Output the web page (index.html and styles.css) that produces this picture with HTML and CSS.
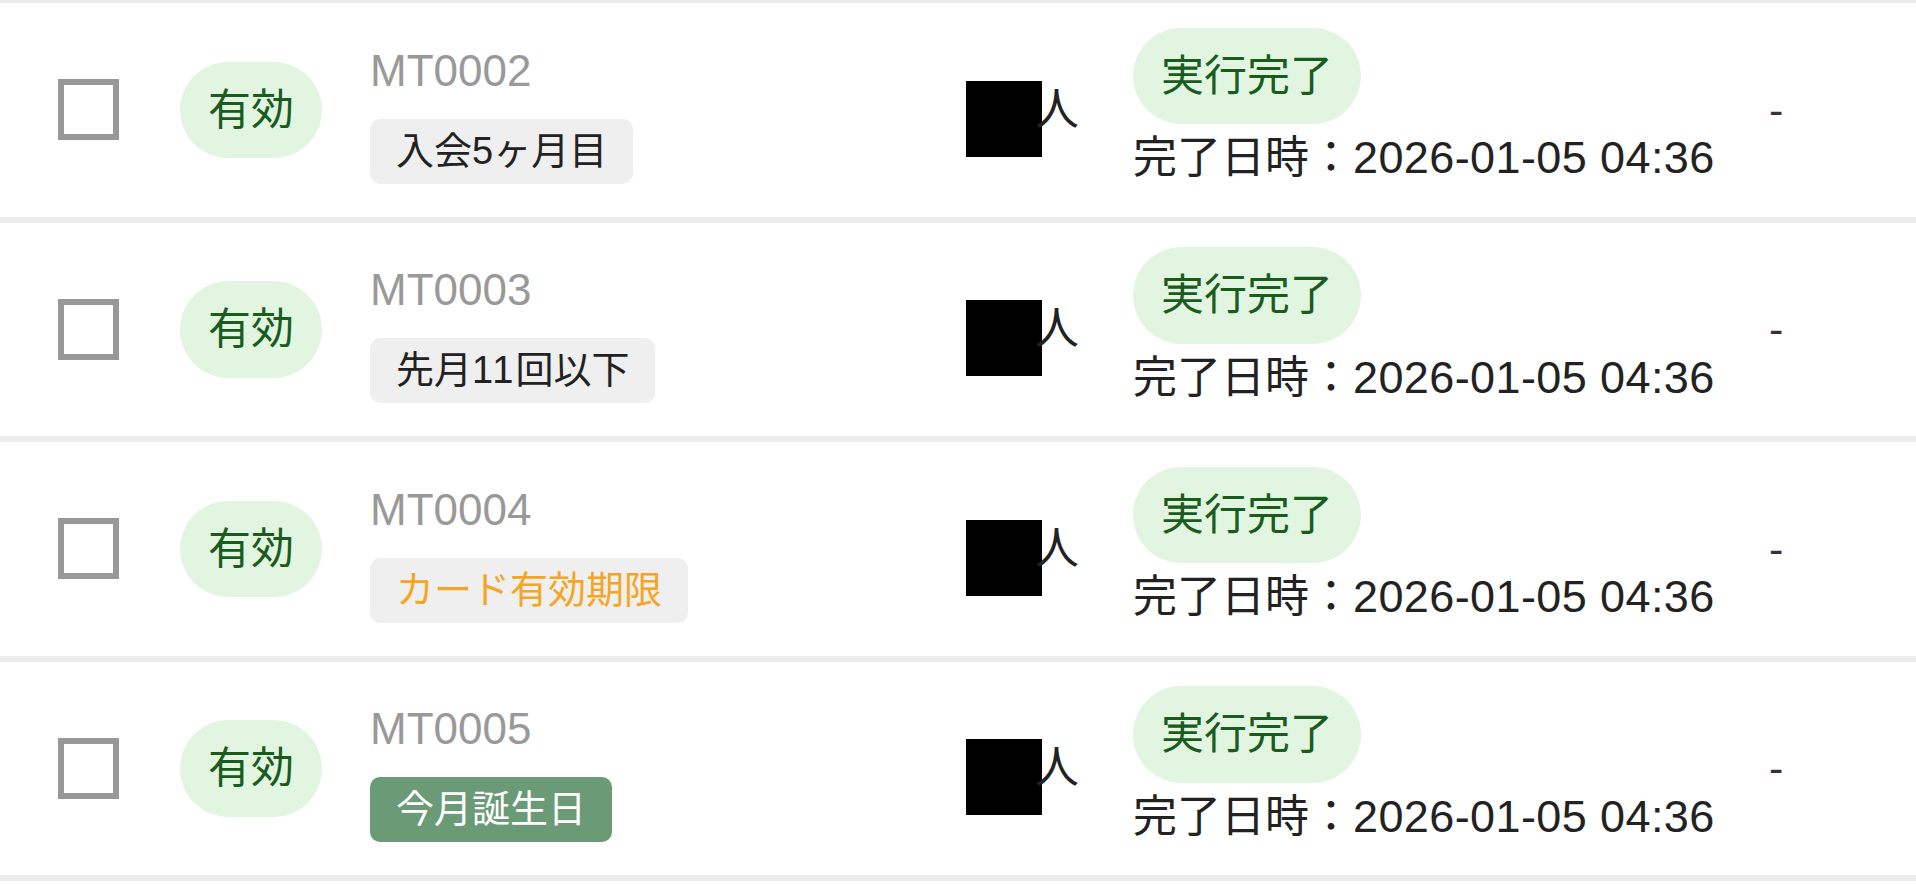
FILE: index.html
```html
<!DOCTYPE html>
<html lang="ja">
<head>
<meta charset="utf-8">
<title>配信一覧</title>
<link rel="stylesheet" href="styles.css">
</head>
<body>
<div class="list">
  <div class="row">
    <div class="cell cell-check"><span class="checkbox"></span></div>
    <div class="cell"><span class="pill">有効</span></div>
    <div class="cell cell-id">
      <div class="code">MT0002</div>
      <span class="tag">入会5ヶ月目</span>
    </div>
    <div class="cell cell-count"><span class="redact"></span><span class="unit">人</span></div>
    <div class="cell cell-status">
      <span class="pill">実行完了</span>
      <div class="done-at">完了日時：<span class="num">2026-01-05 04:36</span></div>
    </div>
    <div class="cell cell-memo">-</div>
  </div>
  <div class="row">
    <div class="cell cell-check"><span class="checkbox"></span></div>
    <div class="cell"><span class="pill">有効</span></div>
    <div class="cell cell-id">
      <div class="code">MT0003</div>
      <span class="tag">先月<span class="num">11</span>回以下</span>
    </div>
    <div class="cell cell-count"><span class="redact"></span><span class="unit">人</span></div>
    <div class="cell cell-status">
      <span class="pill">実行完了</span>
      <div class="done-at">完了日時：<span class="num">2026-01-05 04:36</span></div>
    </div>
    <div class="cell cell-memo">-</div>
  </div>
  <div class="row">
    <div class="cell cell-check"><span class="checkbox"></span></div>
    <div class="cell"><span class="pill">有効</span></div>
    <div class="cell cell-id">
      <div class="code">MT0004</div>
      <span class="tag tag-warn">カード有効期限</span>
    </div>
    <div class="cell cell-count"><span class="redact"></span><span class="unit">人</span></div>
    <div class="cell cell-status">
      <span class="pill">実行完了</span>
      <div class="done-at">完了日時：<span class="num">2026-01-05 04:36</span></div>
    </div>
    <div class="cell cell-memo">-</div>
  </div>
  <div class="row">
    <div class="cell cell-check"><span class="checkbox"></span></div>
    <div class="cell"><span class="pill">有効</span></div>
    <div class="cell cell-id">
      <div class="code">MT0005</div>
      <span class="tag tag-birthday">今月誕生日</span>
    </div>
    <div class="cell cell-count"><span class="redact"></span><span class="unit">人</span></div>
    <div class="cell cell-status">
      <span class="pill">実行完了</span>
      <div class="done-at">完了日時：<span class="num">2026-01-05 04:36</span></div>
    </div>
    <div class="cell cell-memo">-</div>
  </div>
  <div class="row row-next"></div>
</div>
</body>
</html>
```

FILE: styles.css
```css
html, body {
  margin: 0;
  padding: 0;
  background: #ffffff;
  overflow: hidden;
}

body {
  font-family: "Liberation Sans", "Noto Sans CJK JP", sans-serif;
  color: #222222;
}

.list {
  margin-top: -3px;
}

.row {
  display: grid;
  grid-template-columns: 122px 190px 596px 167px 636px 1fr;
  align-items: center;
  height: 213.5px;
  padding-left: 58px;
  border-top: 6px solid #ececec;
  background: #ffffff;
}

.cell {
  display: flex;
  align-items: center;
}

.checkbox {
  display: block;
  width: 61px;
  height: 61px;
  box-sizing: border-box;
  border: 6px solid #989898;
  background: #ffffff;
}

.pill {
  display: inline-block;
  font-size: 43px;
  line-height: 1.5;
  padding: 16px 28px;
  border-radius: 49px;
  background: #e2f5e1;
  color: #1a5c1e;
  white-space: nowrap;
}

.cell-id {
  flex-direction: column;
  align-items: flex-start;
  gap: 16px;
  margin-top: 3px;
}

.code {
  font-size: 44px;
  line-height: 64px;
  color: #999999;
}

.tag {
  display: inline-block;
  font-size: 38px;
  line-height: 65px;
  height: 65px;
  padding: 0 26px;
  border-radius: 10px;
  background: #efefef;
  color: #222222;
  white-space: nowrap;
}

.tag .num {
  letter-spacing: 2px;
}

.tag-warn {
  color: #f5a524;
}

.tag-birthday {
  background: #6b9a77;
  color: #ffffff;
}

.cell-count {
  font-size: 44px;
  line-height: 1.5;
}

.redact {
  display: block;
  width: 76px;
  height: 76px;
  margin-top: 18px;
  margin-right: -7px;
  background: #000000;
}

.cell-status {
  flex-direction: column;
  align-items: flex-start;
}

.done-at {
  font-size: 44px;
  line-height: 1.5;
  color: #222222;
  white-space: nowrap;
}

.done-at .num {
  font-size: 45px;
  letter-spacing: 0.4px;
}

.cell-memo {
  font-size: 43px;
  line-height: 1.5;
  color: #333333;
}
```
